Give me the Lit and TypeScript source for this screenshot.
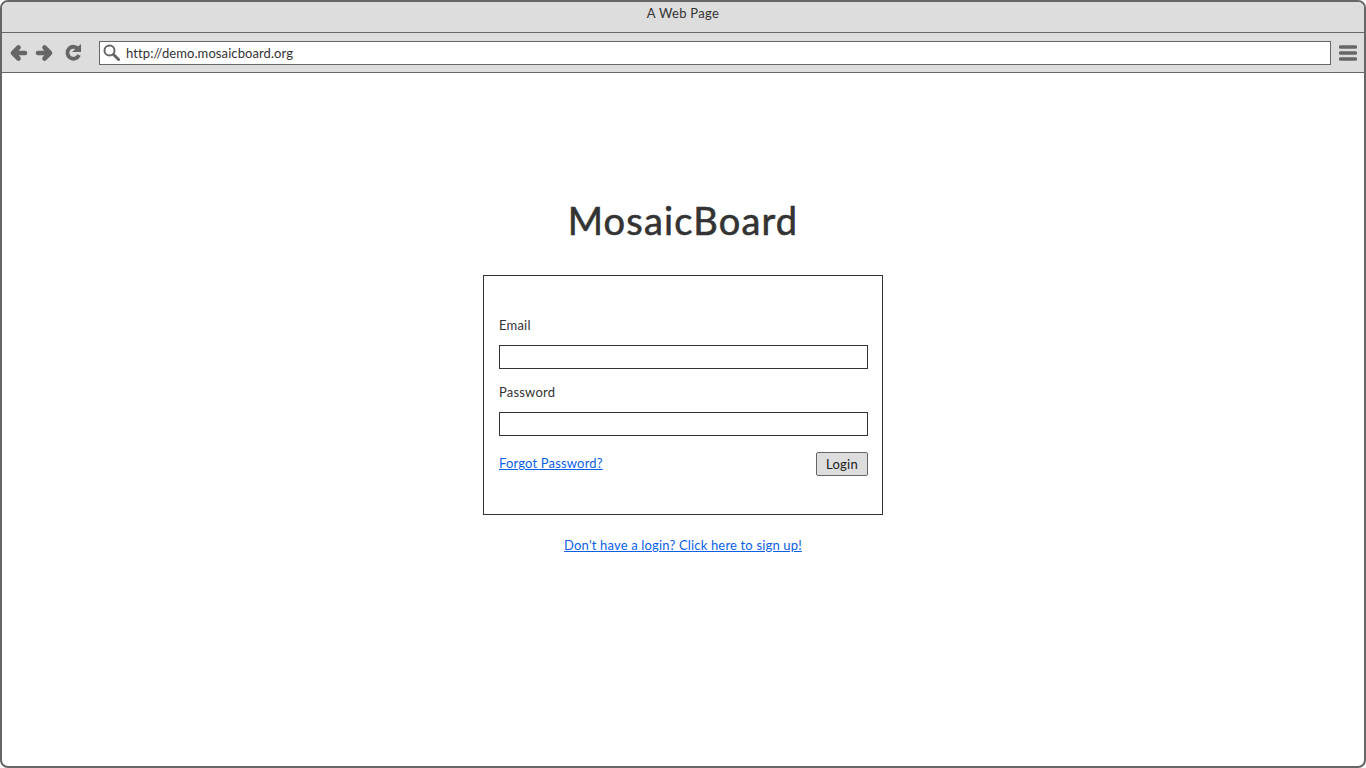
import { LitElement, html, css } from "lit";
import { customElement } from "lit/decorators.js";

@customElement("app-root")
export class AppRoot extends LitElement {
  static styles = css`
    :host { display: block; width: 1366px; height: 768px; font-family: "Lato", "Liberation Sans", sans-serif; color: #333; }
    .frame { box-sizing: border-box; width: 1366px; height: 768px; border: 2px solid #666; border-radius: 8px; overflow: hidden; background: #fff; display: flex; flex-direction: column; }
    .title { box-sizing: border-box; height: 31px; flex: none; background: #ddd; border-bottom: 1px solid #666; display: flex; justify-content: center; padding-top: 3px; font-size: 13px; line-height: 16px; letter-spacing: 0.3px; }
    .bar { box-sizing: border-box; height: 40px; flex: none; background: #ddd; border-bottom: 1px solid #666; display: flex; align-items: center; padding: 1px 7px 0; }
    .nav { display: block; flex: none; }
    .url { box-sizing: border-box; flex: none; height: 24px; width: 1232px; margin-left: 15px; border: 1px solid #666; background: #fff; display: flex; align-items: center; gap: 6px; padding-left: 3px; font-size: 13px; letter-spacing: 0.09px; color: #333; }
    .menu { margin-left: 8px; flex: none; display: block; }
    main { flex: 1; display: flex; flex-direction: column; align-items: center; padding-top: 122px; }
    h1 { margin: 0; font-size: 38px; line-height: 50px; font-weight: 400; color: #333; letter-spacing: 1.17px; -webkit-text-stroke: 0.6px #333; }
    .card { box-sizing: border-box; width: 400px; height: 240px; margin-top: 30px; border: 1px solid #333; padding: 39px 14px 0 15px; }
    label { display: block; font-size: 13px; line-height: 20px; letter-spacing: 0.2px; }
    .input { box-sizing: border-box; height: 24px; margin-top: 10px; margin-bottom: 13px; border: 1px solid #333; background: #fff; }
    .row { display: flex; justify-content: space-between; align-items: center; margin-top: 16px; }
    a { color: #0a5fe6; text-decoration: underline; font-size: 13px; letter-spacing: 0.17px; }
    .forgot { margin-bottom: 2px; }
    .btn { box-sizing: border-box; width: 52px; height: 24px; background: #ddd; border: 1px solid #666; border-radius: 2px; display: flex; align-items: center; justify-content: center; font-size: 13px; letter-spacing: 0.3px; color: #222; }
    .signup { margin-top: 22px; line-height: 16px; }
  `;
  render() {
    return html`<div class="frame">
      <div class="title">A Web Page</div>
      <div class="bar">
        <svg class="nav" width="75" height="20" viewBox="0 0 75 20" fill="none">
          <path d="M16 10H5M9.5 4.5 4 10 9.5 15.5" stroke="#666" stroke-width="4.6" stroke-linejoin="round" stroke-linecap="round" />
          <path d="M29 10H40M35.5 4.5 41 10 35.5 15.5" stroke="#666" stroke-width="4.6" stroke-linejoin="round" stroke-linecap="round" />
          <path d="M69.5 6.5A6 6 0 1 0 70 12" stroke="#666" stroke-width="3.8" />
          <path d="M63 9H72V1Z" fill="#666" />
        </svg>
        <div class="url">
          <svg width="17" height="18" viewBox="0 0 17 18" fill="none">
            <circle cx="6.5" cy="6.5" r="5" stroke="#666" stroke-width="2" />
            <path d="M10.5 10.5 15.5 15.5" stroke="#666" stroke-width="3" stroke-linecap="round" />
          </svg>
          <span>http://demo.mosaicboard.org</span>
        </div>
        <svg class="menu" width="18" height="16" viewBox="0 0 18 16">
          <path d="M1.5 2H16.5M1.5 8H16.5M1.5 14H16.5" stroke="#666" stroke-width="3.4" stroke-linecap="round" />
        </svg>
      </div>
      <main>
        <h1>MosaicBoard</h1>
        <div class="card">
          <label>Email</label>
          <div class="input"></div>
          <label>Password</label>
          <div class="input"></div>
          <div class="row"><a class="forgot" href="#">Forgot Password?</a><div class="btn">Login</div></div>
        </div>
        <a class="signup" href="#">Don't have a login? Click here to sign up!</a>
      </main>
    </div>`;
  }
}
